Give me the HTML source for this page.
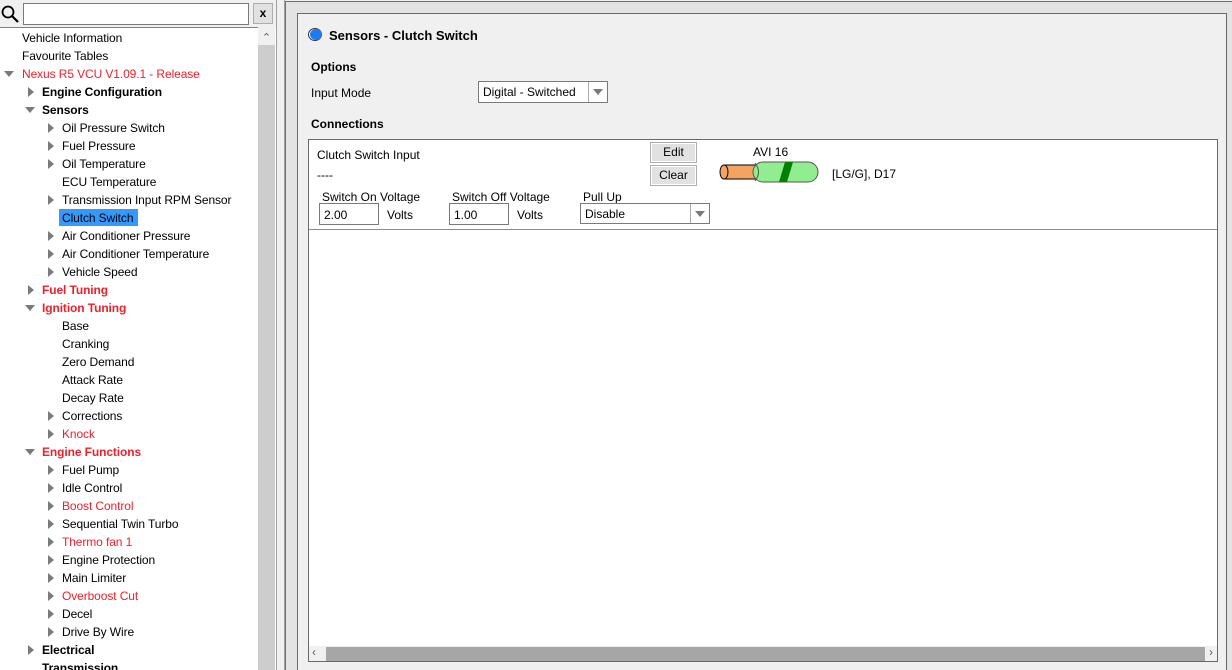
<!DOCTYPE html>
<html style="overflow:hidden"><head><style>
html,body{width:1232px;height:670px}
body{margin:0;overflow:hidden;background:#f0f0f0;font-family:"Liberation Sans",sans-serif;font-size:12px;color:#000;position:relative}
.a{position:absolute}
.row{position:absolute;height:18px;line-height:20px;white-space:nowrap;letter-spacing:-0.1px}
.b{font-weight:bold}
.r{color:#f0202a}
.tri{position:absolute;width:0;height:0}
.tr{border-top:5px solid transparent;border-bottom:5px solid transparent;border-left:6px solid #7a7a7a}
.td{border-left:5px solid transparent;border-right:5px solid transparent;border-top:6px solid #7a7a7a}
.inp{position:absolute;background:#fff;border:1px solid #7a7a7a;box-sizing:border-box;line-height:20px;padding-left:4px}
.btn{position:absolute;background:#e1e1e1;border:1px solid #adadad;box-sizing:border-box;text-align:center;line-height:19px;box-shadow:inset 0 0 0 1px #fff}
.dd{position:absolute;right:0;top:0;width:18px;height:100%;border-left:1px solid #ababab}
.dd:after{content:"";position:absolute;left:4px;top:7px;border-left:5px solid transparent;border-right:5px solid transparent;border-top:6px solid #7a7a7a}
</style></head><body>
<div class="a" style="left:0;top:0;width:276px;height:670px;background:#fff"></div>
<div class="a" style="left:0;top:0;width:276px;height:28px;background:#f0f0f0"></div>
<svg class="a" style="left:0;top:4px" width="20" height="20"><circle cx="8" cy="8" r="5.5" fill="none" stroke="#000" stroke-width="1.8"/><line x1="12" y1="12" x2="18" y2="18" stroke="#000" stroke-width="2.2"/></svg>
<div class="a" style="left:23px;top:3px;width:226px;height:22px;background:#fff;border:1px solid #7a7a7a;box-sizing:border-box"></div>
<div class="a" style="left:253px;top:3px;width:20px;height:21px;background:#e1e1e1;border:1px solid #adadad;box-sizing:border-box;font-weight:bold;text-align:center;line-height:19px">x</div>
<div class="a" style="left:0;top:27px;width:258px;height:1px;background:#828282"></div>
<div class="a" style="left:258px;top:28px;width:17px;height:642px;background:#cdcdcd"></div>
<div class="a" style="left:258px;top:28px;width:17px;height:17px;background:#f0f0f0;text-align:center;font-size:11px;line-height:20px;color:#606060">&#8963;</div>
<div class="a" style="left:276px;top:0;width:9px;height:670px;background:#f0f0f0;border-left:1px solid #a0a0a0;border-right:1px solid #a0a0a0;box-sizing:border-box"></div>

<div class="row" style="left:22px;top:28px">Vehicle Information</div>
<div class="row" style="left:22px;top:46px">Favourite Tables</div>
<div class="tri td" style="left:4px;top:71px"></div><div class="row r" style="left:22px;top:64px">Nexus R5 VCU V1.09.1 - Release</div>
<div class="tri tr" style="left:28px;top:87px"></div><div class="row b" style="left:42px;top:82px">Engine Configuration</div>
<div class="tri td" style="left:25px;top:107px"></div><div class="row b" style="left:42px;top:100px">Sensors</div>
<div class="tri tr" style="left:48px;top:123px"></div><div class="row" style="left:62px;top:118px">Oil Pressure Switch</div>
<div class="tri tr" style="left:48px;top:141px"></div><div class="row" style="left:62px;top:136px">Fuel Pressure</div>
<div class="tri tr" style="left:48px;top:159px"></div><div class="row" style="left:62px;top:154px">Oil Temperature</div>
<div class="row" style="left:62px;top:172px">ECU Temperature</div>
<div class="tri tr" style="left:48px;top:195px"></div><div class="row" style="left:62px;top:190px">Transmission Input RPM Sensor</div>
<div class="a" style="left:59px;top:209px;width:79px;height:17px;background:#3399ff"></div><div class="row" style="left:62px;top:208px">Clutch Switch</div>
<div class="tri tr" style="left:48px;top:231px"></div><div class="row" style="left:62px;top:226px">Air Conditioner Pressure</div>
<div class="tri tr" style="left:48px;top:249px"></div><div class="row" style="left:62px;top:244px">Air Conditioner Temperature</div>
<div class="tri tr" style="left:48px;top:267px"></div><div class="row" style="left:62px;top:262px">Vehicle Speed</div>
<div class="tri tr" style="left:28px;top:285px"></div><div class="row b r" style="left:42px;top:280px">Fuel Tuning</div>
<div class="tri td" style="left:25px;top:305px"></div><div class="row b r" style="left:42px;top:298px">Ignition Tuning</div>
<div class="row" style="left:62px;top:316px">Base</div>
<div class="row" style="left:62px;top:334px">Cranking</div>
<div class="row" style="left:62px;top:352px">Zero Demand</div>
<div class="row" style="left:62px;top:370px">Attack Rate</div>
<div class="row" style="left:62px;top:388px">Decay Rate</div>
<div class="tri tr" style="left:48px;top:411px"></div><div class="row" style="left:62px;top:406px">Corrections</div>
<div class="tri tr" style="left:48px;top:429px"></div><div class="row r" style="left:62px;top:424px">Knock</div>
<div class="tri td" style="left:25px;top:449px"></div><div class="row b r" style="left:42px;top:442px">Engine Functions</div>
<div class="tri tr" style="left:48px;top:465px"></div><div class="row" style="left:62px;top:460px">Fuel Pump</div>
<div class="tri tr" style="left:48px;top:483px"></div><div class="row" style="left:62px;top:478px">Idle Control</div>
<div class="tri tr" style="left:48px;top:501px"></div><div class="row r" style="left:62px;top:496px">Boost Control</div>
<div class="tri tr" style="left:48px;top:519px"></div><div class="row" style="left:62px;top:514px">Sequential Twin Turbo</div>
<div class="tri tr" style="left:48px;top:537px"></div><div class="row r" style="left:62px;top:532px">Thermo fan 1</div>
<div class="tri tr" style="left:48px;top:555px"></div><div class="row" style="left:62px;top:550px">Engine Protection</div>
<div class="tri tr" style="left:48px;top:573px"></div><div class="row" style="left:62px;top:568px">Main Limiter</div>
<div class="tri tr" style="left:48px;top:591px"></div><div class="row r" style="left:62px;top:586px">Overboost Cut</div>
<div class="tri tr" style="left:48px;top:609px"></div><div class="row" style="left:62px;top:604px">Decel</div>
<div class="tri tr" style="left:48px;top:627px"></div><div class="row" style="left:62px;top:622px">Drive By Wire</div>
<div class="tri tr" style="left:28px;top:645px"></div><div class="row b" style="left:42px;top:640px">Electrical</div>
<div class="row b" style="left:42px;top:658px">Transmission</div>

<div class="a" style="left:285px;top:1px;width:947px;height:669px;background:#e3e3e3;border-top:1px solid #707070;border-left:1px solid #707070;box-sizing:border-box"></div>
<div class="a" style="left:297px;top:13px;width:930px;height:657px;background:#f0f0f0;border:1px solid #696969;border-bottom:none;box-sizing:border-box"></div>
<div class="a" style="left:308px;top:28px;width:14px;height:13px;border-radius:50%;border:1px solid #333;box-sizing:border-box;background:#fff"></div>
<div class="a" style="left:310px;top:29px;width:12px;height:11px;border-radius:50%;background:#1e7cf0"></div>
<div class="a b" style="left:329px;top:28px;font-size:13px">Sensors - Clutch Switch</div>
<div class="a b" style="left:311px;top:60px">Options</div>
<div class="a" style="left:311px;top:86px">Input Mode</div>
<div class="inp" style="left:478px;top:81px;width:130px;height:22px">Digital - Switched<div class="dd"></div></div>
<div class="a b" style="left:311px;top:117px">Connections</div>

<div class="a" style="left:308px;top:139px;width:910px;height:523px;background:#fff;border:1px solid #696969;box-sizing:border-box"></div>
<div class="a" style="left:309px;top:229px;width:908px;height:1px;background:#8c8c8c"></div>
<div class="a" style="left:317px;top:148px">Clutch Switch Input</div>
<div class="a" style="left:317px;top:168px">----</div>
<div class="btn" style="left:650px;top:142px;width:47px;height:21px">Edit</div>
<div class="btn" style="left:650px;top:165px;width:47px;height:21px">Clear</div>
<div class="a" style="left:753px;top:145px">AVI 16</div>
<svg class="a" style="left:715px;top:158px" width="110" height="28">
<rect x="9" y="7" width="40" height="14" fill="#f4a460" stroke="#000"/>
<ellipse cx="9" cy="14" rx="4" ry="7" fill="#f4a460" stroke="#000"/>
<rect x="38" y="4" width="65" height="20" rx="10" fill="#90ee90" stroke="#555"/>
<path d="M40 5 Q47 14 40 23" fill="none" stroke="#555"/>
<path d="M70 4 L78 4 L72 24 L64 24 Z" fill="#008000"/>
</svg>
<div class="a" style="left:832px;top:167px">[LG/G], D17</div>
<div class="a" style="left:322px;top:190px">Switch On Voltage</div>
<div class="inp" style="left:319px;top:203px;width:60px;height:22px;line-height:22px">2.00</div>
<div class="a" style="left:387px;top:208px">Volts</div>
<div class="a" style="left:452px;top:190px">Switch Off Voltage</div>
<div class="inp" style="left:449px;top:203px;width:60px;height:22px;line-height:22px">1.00</div>
<div class="a" style="left:517px;top:208px">Volts</div>
<div class="a" style="left:583px;top:190px">Pull Up</div>
<div class="inp" style="left:580px;top:203px;width:130px;height:21px">Disable<div class="dd"></div></div>

<div class="a" style="left:309px;top:646px;width:908px;height:15px;background:#f0f0f0"></div>
<div class="a" style="left:326px;top:647px;width:879px;height:14px;background:#a6a6a6"></div>
<div class="a" style="left:312px;top:645px;font-size:12px;color:#606060">&#8249;</div>
<div class="a" style="left:1209px;top:645px;font-size:12px;color:#606060">&#8250;</div>
</body></html>
